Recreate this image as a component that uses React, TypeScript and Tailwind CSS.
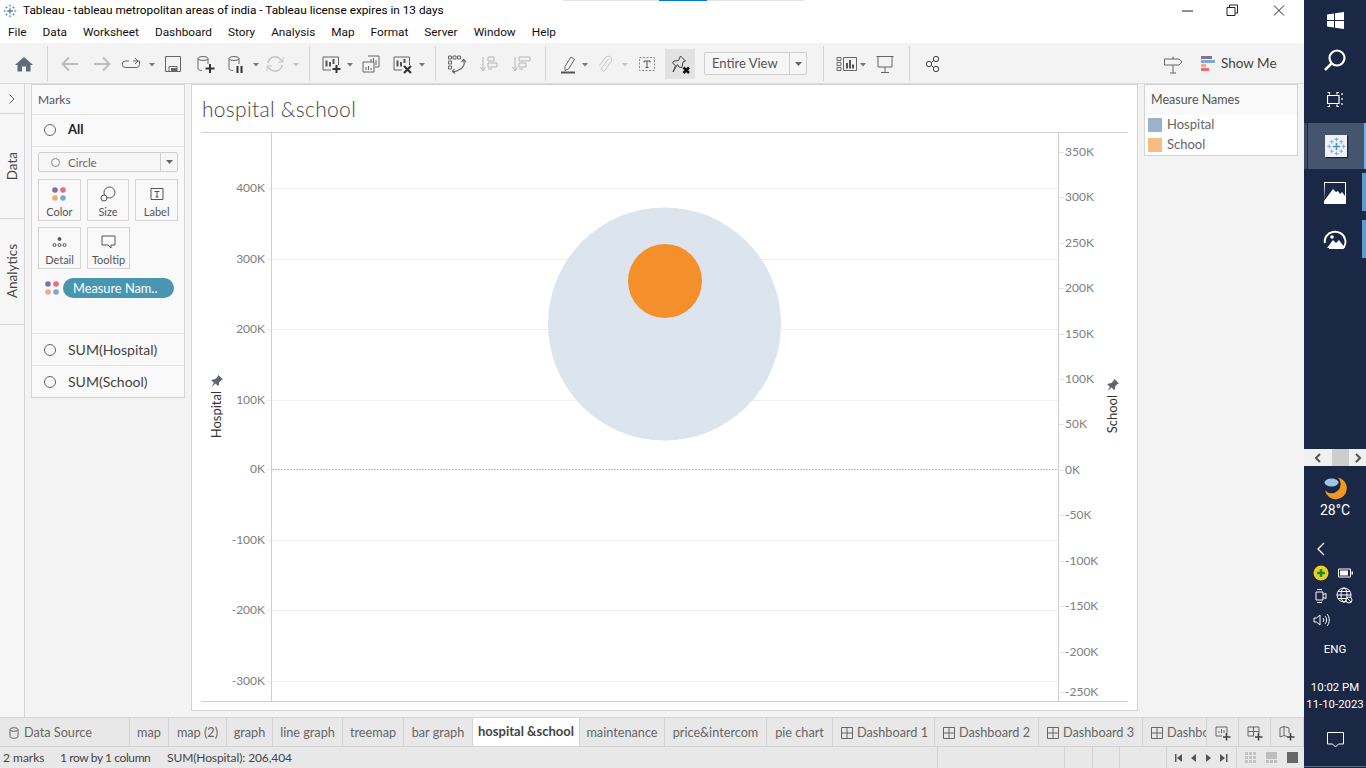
import React from 'react';

const menus = ['File', 'Data', 'Worksheet', 'Dashboard', 'Story', 'Analysis', 'Map', 'Format', 'Server', 'Window', 'Help'];

const leftTicks = [
  ['400K', 188], ['300K', 259], ['200K', 329], ['100K', 400], ['0K', 469], ['-100K', 540], ['-200K', 610], ['-300K', 681],
] as const;

const rightTicks = [
  ['350K', 152], ['300K', 197], ['250K', 243], ['200K', 288], ['150K', 334], ['100K', 379], ['50K', 424], ['0K', 470],
  ['-50K', 515], ['-100K', 561], ['-150K', 606], ['-200K', 652], ['-250K', 692],
] as const;

const sheetTabs = [
  { name: 'map', cls: 'w-[39px]' },
  { name: 'map (2)', cls: 'w-[58px]' },
  { name: 'graph', cls: 'w-[46px]' },
  { name: 'line graph', cls: 'w-[70px]' },
  { name: 'treemap', cls: 'w-[61px]' },
  { name: 'bar graph', cls: 'w-[69px]' },
];

const sheetTabs2 = [
  { name: 'maintenance', cls: 'w-[85px]' },
  { name: 'price&intercom', cls: 'w-[102px]' },
  { name: 'pie chart', cls: 'w-[66px]' },
];

const dashTabs = [
  { name: 'Dashboard 1', cls: 'w-[102px]' },
  { name: 'Dashboard 2', cls: 'w-[104px]' },
  { name: 'Dashboard 3', cls: 'w-[104px]' },
];

function Sep() {
  return <div className="w-px h-[35px] bg-[#d4d4d4] shrink-0" />;
}

function Caret({ cls, light }: { cls: string; light?: boolean }) {
  return (
    <svg width="6" height="4" viewBox="0 0 6 4" className={'shrink-0 mt-0.5 ' + cls}>
      <path d="M0 0h6L3 3.5z" fill={light ? '#c4c4c4' : '#777'} />
    </svg>
  );
}

function Ico({ cls, w = 20, children }: { cls: string; w?: number; children: React.ReactNode }) {
  return (
    <svg width={w} height="20" viewBox={`0 0 ${w} 20`} fill="none" stroke="#666" strokeWidth="1" className={'shrink-0 ' + cls}>
      {children}
    </svg>
  );
}

function TableauMark({ size, tone }: { size: number; tone: string }) {
  return (
    <svg width={size} height={size} viewBox="0 0 20 20" stroke={tone} fill="none">
      <path d="M10 6v8M6 10h8" strokeWidth="1.800" />
      <path d="M10 .5v4M8 2.500h4M10 15.500v4M8 17.500h4M.5 10h4M2.500 8v4M15.500 10h4M17.500 8v4" strokeWidth="1.100" opacity=".7" />
      <path d="M5 3v4M3 5h4M15 3v4M13 5h4M5 13v4M3 15h4M15 13v4M13 15h4" strokeWidth="1.100" opacity=".7" />
    </svg>
  );
}

function Dots() {
  return (
    <svg width="14" height="14" viewBox="0 0 14 14">
      <circle cx="3" cy="3" r="2.800" fill="#86709a" />
      <circle cx="11" cy="3" r="2.800" fill="#f0697a" />
      <circle cx="3" cy="11" r="2.800" fill="#f4a97c" />
      <circle cx="11" cy="11" r="2.800" fill="#7fa6cf" />
    </svg>
  );
}

function MarkCard({ label, ml, children }: { label: string; ml?: string; children: React.ReactNode }) {
  return (
    <div className={'w-[43px] h-[42px] border border-[#d4d4d4] flex flex-col items-center pt-[3px] text-[11px] leading-[14px] text-[#555] ' + (ml ?? '')}>
      <div className="h-[21px] flex items-center justify-center">{children}</div>
      <span className="mt-[1px]">{label}</span>
    </div>
  );
}

function Radio() {
  return <div className="w-[12px] h-[12px] rounded-full border-[1.5px] border-[#666] shrink-0" />;
}

function Pin() {
  return (
    <svg width="14" height="14" viewBox="0 0 14 14" fill="#5f6672">
      <path d="M8.500 1l4.500 4.500-1.500.6-2.400 2.400-.2 2.600-1 1-2.300-2.600L1.500 13l2.400-4.200L1.400 6.500l1-1 2.600-.2 2.400-2.400z" />
    </svg>
  );
}

function Toolbar() {
  return (
    <div className="h-[41px] bg-[#f3f3f3] border-b border-[#dcdcdc] flex items-center pt-[1px] shrink-0">
      <Ico cls="ml-[14px]">
        <path d="M10 3l9 8h-2.500v6.500h-4.500v-5H8v5H3.500V11H1z" fill="#5f6b7a" stroke="none" />
      </Ico>
      <div className="ml-[13px]"><Sep /></div>
      <Ico cls="ml-[12px]"><path d="M18 10H3M9 3.500L2.500 10 9 16.500" stroke="#bdbdbd" strokeWidth="2" /></Ico>
      <Ico cls="ml-[12px]"><path d="M2 10h15M11 3.500l6.500 6.500-6.500 6.500" stroke="#bdbdbd" strokeWidth="2" /></Ico>
      <Ico cls="ml-[9px]"><path d="M8 7H4.500a3 3 0 0 0 0 6.500h11a3 3 0 0 0 3-3V7H12M14 4l3 3-3 3" /></Ico>
      <Caret cls="ml-[8px]" />
      <Ico cls="ml-[8px]"><path d="M2.500 2.500h15v15h-15z" /><path d="M6 17.500v-5h8v5" /><path d="M8 14h6v3H8z" fill="#666" stroke="none" /></Ico>
      <Ico cls="ml-[12px]">
        <ellipse cx="8" cy="4.500" rx="5" ry="2" />
        <path d="M3 4.500v10c0 1 1.500 2 4 2M13 4.500V10" />
        <path d="M15 10v9M10.500 14.500h9" stroke="#333" strokeWidth="2" />
      </Ico>
      <Ico cls="ml-[11px]">
        <ellipse cx="8" cy="4.500" rx="5" ry="2" />
        <path d="M3 4.500v10c0 1 1.500 2 4 2M13 4.500V10" />
        <path d="M11.500 12v7M15.500 12v7" stroke="#333" strokeWidth="2" />
      </Ico>
      <Caret cls="ml-[7px]" />
      <Ico cls="ml-[6px]">
        <path d="M3 9a7 7 0 0 1 12-4l2 2M17 11a7 7 0 0 1-12 4l-2-2" stroke="#c4c4c4" strokeWidth="1.500" />
        <path d="M18 3v5h-5M2 17v-5h5" stroke="#c4c4c4" />
      </Ico>
      <Caret cls="ml-[8px]" light />
      <div className="ml-[10px]"><Sep /></div>
      <Ico cls="ml-[11px]">
        <path d="M2 3h15.500v8M2 3v13h8" />
        <path d="M5.500 6.500v6M9 8v4.500M12.500 5v5" strokeWidth="2" stroke="#555" />
        <path d="M15.500 11v8M11.500 15h8" stroke="#333" strokeWidth="2" />
      </Ico>
      <Caret cls="ml-[6px]" />
      <Ico cls="ml-[8px]">
        <path d="M7 2h11v11h-4" /><path d="M2 8h11v10H2z" fill="#f3f3f3" />
        <path d="M10 5v3M12.500 4v4M15 6v5M5 13v3M7.500 12v4M10 14v2" />
      </Ico>
      <Ico cls="ml-[11px]">
        <path d="M2 3h15.500v8M2 3v13h8" />
        <path d="M5.500 6.500v6M9 8v4.500M12.500 5v4" strokeWidth="2" stroke="#555" />
        <path d="M12 12l7 7M19 12l-7 7" stroke="#333" strokeWidth="2.200" />
      </Ico>
      <Caret cls="ml-[7px]" />
      <div className="ml-[10px]"><Sep /></div>
      <Ico cls="ml-[11px]">
        <path d="M1.500 2h3v3h-3zM6 2h3v3H6zM10.500 2h3v3h-3zM1.500 7h3v3h-3zM1.500 12h3v3h-3z" />
        <path d="M16.500 6c2 4 0 8-5 10M5.500 17.500c2 .5 4 0 6-1.500" strokeWidth="1.200" />
        <path d="M14.500 8l2-2.500L19 8M7.500 15l-2 2.500 2.500 2" strokeWidth="1.200" />
      </Ico>
      <Ico cls="ml-[12px]">
        <path d="M4 3v13M1.500 13L4 17l2.500-4" stroke="#b5b5b5" />
        <path d="M9 3h6v4H9zM9 9h9v4H9zM9 15h4" stroke="#b5b5b5" />
      </Ico>
      <Ico cls="ml-[12px]">
        <path d="M4 3v13M1.500 13L4 17l2.500-4" stroke="#b5b5b5" />
        <path d="M8 3h11v4H8zM8 9h7v4H8zM8 15h4" stroke="#b5b5b5" />
      </Ico>
      <div className="ml-[14px]"><Sep /></div>
      <Ico cls="ml-[12px]">
        <path d="M7 12.500L13 3l3.500 2.500-6 9.500-3.500 1.500z" />
        <path d="M3 18.500h14" stroke="#555" strokeWidth="2" />
      </Ico>
      <Caret cls="ml-[4px]" />
      <Ico cls="ml-[7px]">
        <path d="M14 4.500L6.500 14a2.200 2.200 0 0 0 3.500 2.500L16.500 7a3.500 3.500 0 0 0-5.500-4L4.500 11.500" stroke="#c4c4c4" />
      </Ico>
      <Caret cls="ml-[7px]" light />
      <Ico cls="ml-[9px]">
        <path d="M2.500 3.500h15v13h-15z" strokeDasharray="2 1.500" stroke="#888" />
        <path d="M7 7h6M10 7v6.500M8.500 13.500h3M7 7v1.500M13 7v1.500" stroke="#555" />
      </Ico>
      <div className="ml-[8px] w-[30px] h-[30px] bg-[#e2e2e2] flex items-center justify-center shrink-0">
        <svg width="24" height="24" viewBox="0 0 24 24" fill="none" stroke="#444">
          <path d="M12.500 4l5 5-2.500 1-1 5.500-3-.5-1.500-2.500L5 20l2.500-6.500L4.500 11 6 9l4.500-.5z" />
          <path d="M15.500 15.500l5.500 5.500M21 15.500L15.500 21" stroke="#111" strokeWidth="2.500" />
        </svg>
      </div>
      <div className="ml-[9px] w-[103px] h-[23px] border border-[#cfcfcf] rounded-[2px] flex items-center shrink-0 bg-[#f6f6f6]">
        <span className="w-[84px] pl-[7px] text-[13px] text-[#555] font-['Lato',sans-serif]">Entire View</span>
        <div className="flex-1 h-full border-l border-[#cfcfcf] flex items-center justify-center">
          <svg width="7" height="4" viewBox="0 0 7 4"><path d="M0 0h7L3.500 4z" fill="#666" /></svg>
        </div>
      </div>
      <div className="ml-[16px]"><Sep /></div>
      <Ico cls="ml-[12px]" w={22}>
        <path d="M1 3.500h4v3H1zM1 8.500h4v3H1zM1 13.500h4v3H1zM7.500 3.500h13v13h-13z" />
        <path d="M11 9v5.500M14 6v8.500M17 10.500v4" stroke="#555" strokeWidth="2" />
      </Ico>
      <Caret cls="ml-[2px]" />
      <Ico cls="ml-[9px]">
        <path d="M1.500 2.500h17M3 2.500v10.500h14V2.500" />
        <path d="M10 13v5M6 18.500h8" />
      </Ico>
      <div className="ml-[14px]"><Sep /></div>
      <Ico cls="ml-[12px]">
        <circle cx="7" cy="10" r="2.700" stroke="#444" /><circle cx="14" cy="5" r="2.700" stroke="#444" /><circle cx="14" cy="15" r="2.700" stroke="#444" />
        <path d="M9.300 8.500l2.500-2M9.300 11.500l2.500 2" stroke="#444" />
      </Ico>
      <div className="ml-auto flex items-center">
        <Ico cls="">
          <path d="M1.500 5h14.500l3 3-3 3H1.500zM10 2.500V5M10 11v8M7 19h6" />
        </Ico>
        <div className="ml-[18px] flex flex-col gap-px w-[14px]">
          <div className="h-[3px] w-[11px] bg-[#86709a]" />
          <div className="h-[3px] w-[14px] bg-[#7fa6cf]" />
          <div className="h-[3px] w-[5px] bg-[#f4a97c]" />
          <div className="h-[3px] w-[8px] bg-[#f0697a]" />
        </div>
        <span className="ml-[6px] mr-[28px] w-[55px] text-[13.500px] text-[#444] font-['Lato',sans-serif] whitespace-nowrap">Show Me</span>
      </div>
    </div>
  );
}

function LeftStrip() {
  return (
    <div className="w-[25px] h-full border-r border-[#d4d4d4] bg-[#f6f6f6] flex flex-col shrink-0 text-[#444] text-[13.500px] font-['Lato',sans-serif]">
      <div className="h-[30px] border-b border-[#d4d4d4] flex items-center justify-center">
        <svg width="8" height="12" viewBox="0 0 8 12" fill="none" stroke="#666"><path d="M1.500 1.500L6 6l-4.500 4.500" /></svg>
      </div>
      <div className="h-[105px] border-b border-[#d4d4d4] flex items-center justify-center pl-[1px]">
        <span className="[writing-mode:vertical-rl] rotate-180">Data</span>
      </div>
      <div className="h-[106px] border-b border-[#d4d4d4] flex items-center justify-center pl-[1px]">
        <span className="[writing-mode:vertical-rl] rotate-180">Analytics</span>
      </div>
    </div>
  );
}

function MarksCard() {
  return (
    <div className="ml-[6px] w-[154px] h-[314px] border border-[#d4d4d4] bg-[#f9f9f9] flex flex-col shrink-0 font-['Lato',sans-serif] text-[#444]">
      <div className="h-[30px] border-b border-[#e2e2e2] flex items-center pl-[6px] text-[12px] text-[#555]">Marks</div>
      <div className="h-[32px] pb-[2px] border-b border-[#e2e2e2] flex items-center pl-[12px] gap-[12px]">
        <Radio />
        <span className="text-[13px] font-bold text-[#222]">All</span>
      </div>
      <div className="h-[187px] px-[6px] pt-[5px] border-b border-[#e2e2e2]">
        <div className="h-[20px] border border-[#cfcfcf] rounded-[2px] flex items-center bg-[#f6f6f6]">
          <div className="w-[121px] flex items-center pl-[12px] gap-[8px] pt-[1px] text-[11.500px] text-[#666]">
            <div className="w-[9px] h-[9px] rounded-full border border-[#888]" />
            <span>Circle</span>
          </div>
          <div className="flex-1 h-full border-l border-[#cfcfcf] flex items-center justify-center">
            <svg width="7" height="4" viewBox="0 0 7 4"><path d="M0 0h7L3.500 4z" fill="#666" /></svg>
          </div>
        </div>
        <div className="flex mt-[7px]">
          <MarkCard label="Color"><Dots /></MarkCard>
          <MarkCard label="Size" ml="ml-[6px]">
            <svg width="16" height="16" viewBox="0 0 16 16" fill="none" stroke="#555">
              <circle cx="9.500" cy="6.500" r="5.500" /><circle cx="4" cy="12" r="3" fill="#f9f9f9" />
            </svg>
          </MarkCard>
          <MarkCard label="Label" ml="ml-[6px]">
            <svg width="14" height="14" viewBox="0 0 14 14" fill="none" stroke="#555">
              <path d="M1 1.500h12v11H1z" /><path d="M4.500 4.500h5M7 4.500v5.500M5.500 10h3" />
            </svg>
          </MarkCard>
        </div>
        <div className="flex mt-[6px]">
          <MarkCard label="Detail">
            <svg width="15" height="12" viewBox="0 0 15 12" fill="none" stroke="#555">
              <circle cx="7.500" cy="3" r="1.500" fill="#555" /><circle cx="2.500" cy="9" r="1.500" /><circle cx="7.500" cy="9" r="1.500" /><circle cx="12.500" cy="9" r="1.500" />
            </svg>
          </MarkCard>
          <MarkCard label="Tooltip" ml="ml-[6px]">
            <svg width="15" height="14" viewBox="0 0 15 14" fill="none" stroke="#555"><path d="M1 1h13v9H10v3L7 10H1z" /></svg>
          </MarkCard>
        </div>
        <div className="flex items-center mt-[9px] pl-[7px]">
          <Dots />
          <div className="ml-[4px] w-[111px] h-[20px] rounded-full bg-[#4996b2] text-white text-[12.800px] leading-[20px] pl-[10px] whitespace-nowrap">Measure Nam..</div>
        </div>
      </div>
      <div className="h-[32px] border-b border-[#e2e2e2] flex items-center pl-[12px] gap-[12px] text-[14px]">
        <Radio />
        <span>SUM(Hospital)</span>
      </div>
      <div className="flex-1 flex items-center pl-[12px] gap-[12px] text-[14px]">
        <Radio />
        <span>SUM(School)</span>
      </div>
    </div>
  );
}

function Chart() {
  return (
    <div className="mx-[9px] flex-1 flex border-y border-[#cfcfcf] relative">
      <div className="w-[71px] border-r border-[#cfcfcf] relative shrink-0" />
      <div className="flex-1">
        <svg width="786" height="568" viewBox="0 0 786 568">
          {leftTicks.map(([label, y]) =>
            label === '0K' ? (
              <line key={label} x1="0" x2="786" y1={y - 132.500} y2={y - 132.500} stroke="#bdbdbd" strokeDasharray="2 1" />
            ) : (
              <line key={label} x1="0" x2="786" y1={y - 132.500} y2={y - 132.500} stroke="#efefef" />
            ),
          )}
          <circle cx="392.500" cy="191" r="116.500" fill="#dce4ed" />
          <circle cx="393" cy="148" r="37" fill="#f48f2c" />
        </svg>
      </div>
      <div className="w-[70px] border-l border-[#cfcfcf] shrink-0" />
      {leftTicks.map(([label, y]) => (
        <div
          key={label}
          className="absolute left-0 w-[64px] text-right text-[12px] leading-[14px] text-[#808080]"
          style={{ top: y - 133 - 7 }}
        >
          {label}
        </div>
      ))}
      {leftTicks.map(([label, y]) => (
        <div key={label} className="absolute left-[65px] w-[5px] h-px bg-[#efefef]" style={{ top: y - 133 }} />
      ))}
      {rightTicks.map(([label, y]) => (
        <div
          key={label}
          className="absolute left-[864px] text-[12px] leading-[14px] text-[#808080]"
          style={{ top: y - 133 - 7 }}
        >
          {label}
        </div>
      ))}
      {rightTicks.map(([label, y]) => (
        <div key={label} className="absolute left-[858px] w-[5px] h-px bg-[#e5e5e5]" style={{ top: y - 133 }} />
      ))}
      <div className="absolute left-[8px] top-[241px] flex flex-col items-center w-[15px] text-[13px] text-[#333]">
        <Pin />
        <span className="mt-[3px] [writing-mode:vertical-rl] rotate-180 leading-[15px]">Hospital</span>
      </div>
      <div className="absolute left-[904px] top-[245px] flex flex-col items-center w-[15px] text-[13px] text-[#333]">
        <Pin />
        <span className="mt-[3px] [writing-mode:vertical-rl] rotate-180 leading-[15px]">School</span>
      </div>
    </div>
  );
}

function Viz() {
  return (
    <div className="ml-[6px] w-[947px] h-[627px] border border-[#d4d4d4] bg-white flex flex-col pb-[9px] shrink-0 font-['Lato',sans-serif]">
      <div className="h-[47px] shrink-0 pl-[10px] pt-[10px] text-[21px] tracking-[0.3px] leading-[28px] font-light text-[#444]">hospital &amp;school</div>
      <Chart />
    </div>
  );
}

function Legend() {
  return (
    <div className="ml-[6px] w-[154px] h-[72px] border border-[#d4d4d4] bg-white shrink-0 font-['Lato',sans-serif] text-[12.500px] text-[#666]">
      <div className="h-[30px] bg-[#f9f9f9] flex items-center pl-[6px] pt-[1px] text-[#555]">Measure Names</div>
      <div className="flex items-center h-[20px] pl-[3px] gap-[5px] text-[13px]">
        <div className="w-[14px] h-[14px] bg-[#9bb1cc]" />
        <span>Hospital</span>
      </div>
      <div className="flex items-center h-[20px] pl-[3px] gap-[5px] text-[13px]">
        <div className="w-[14px] h-[14px] bg-[#f7bd80]" />
        <span>School</span>
      </div>
    </div>
  );
}

function DashIcon() {
  return (
    <svg width="12" height="12" viewBox="0 0 12 12" fill="none" stroke="#666" className="shrink-0">
      <path d="M.5.500h11v11H.5zM6 .500v11M.5 6h11" />
    </svg>
  );
}

function Tabs() {
  const tabCls = 'h-full border-r border-[#d4d4d4] flex items-center justify-center pt-[2px] shrink-0 text-[12.700px] text-[#666] whitespace-nowrap';
  return (
    <div className="h-[30px] bg-[#e8e8e8] border-y border-[#d4d4d4] flex shrink-0 font-['Lato',sans-serif] overflow-hidden">
      <div className={tabCls + ' w-[130px] justify-start pl-[9px] gap-[5px]'}>
        <svg width="10" height="12" viewBox="0 0 10 12" fill="none" stroke="#666">
          <ellipse cx="5" cy="2.500" rx="4" ry="1.800" /><path d="M1 2.500v7c0 1 1.800 1.800 4 1.800s4-.8 4-1.800v-7" />
        </svg>
        <span>Data Source</span>
      </div>
      {sheetTabs.map((t) => (
        <div key={t.name} className={tabCls + ' ' + t.cls}>{t.name}</div>
      ))}
      <div className="h-full w-[107px] border-r border-[#d4d4d4] bg-white flex items-center justify-center shrink-0 font-bold text-[13px] text-[#444] whitespace-nowrap">hospital &amp;school</div>
      {sheetTabs2.map((t) => (
        <div key={t.name} className={tabCls + ' ' + t.cls}>{t.name}</div>
      ))}
      {dashTabs.map((t) => (
        <div key={t.name} className={tabCls + ' ' + t.cls + ' justify-start pl-[8px] gap-[4px]'}>
          <DashIcon />
          <span>{t.name}</span>
        </div>
      ))}
      <div className={tabCls + ' w-[64px] justify-start pl-[8px] gap-[4px] overflow-hidden'}>
        <DashIcon />
        <span>Dashboard 4</span>
      </div>
      <div className={tabCls + ' w-[32px]'}>
        <svg width="16" height="16" viewBox="0 0 16 16" fill="none" stroke="#666">
          <path d="M1 2h11v6M1 2v9h6M4 8V6M6.500 8V4M9 8V5" /><path d="M11.500 8v7.500M8 12h7.500" stroke="#444" strokeWidth="1.600" />
        </svg>
      </div>
      <div className={tabCls + ' w-[32px]'}>
        <svg width="16" height="16" viewBox="0 0 16 16" fill="none" stroke="#666">
          <path d="M1 2h11v6M1 2v9h6M6.500 2v9M1 6.500h11" /><path d="M11.500 8v7.500M8 12h7.500" stroke="#444" strokeWidth="1.600" />
        </svg>
      </div>
      <div className={tabCls + ' w-[33px]'}>
        <svg width="16" height="16" viewBox="0 0 16 16" fill="none" stroke="#666">
          <path d="M1 3l4-1.500v9L1 12zM5 1.500l5 1.500v5M5 10.500L8 11.500" /><path d="M11.500 8v7.500M8 12h7.500" stroke="#444" strokeWidth="1.600" />
        </svg>
      </div>
    </div>
  );
}

function StatusBar() {
  return (
    <div className="h-[21px] bg-[#e8e8e8] flex items-center shrink-0 font-['Lato',sans-serif] text-[12px] text-[#444] whitespace-nowrap">
      <span className="ml-[3px] w-[41px]">2 marks</span>
      <span className="ml-[16px] w-[90px] tracking-[-0.4px]">1 row by 1 column</span>
      <span className="ml-[17px] tracking-[-0.1px]">SUM(Hospital): 206,404</span>
      <div className="ml-auto h-full flex">
        <div className="w-[127px] border-l border-[#d4d4d4]" />
        <div className="w-[28px] border-l border-[#d4d4d4]" />
        <div className="w-[27px] border-l border-[#d4d4d4]" />
        <div className="w-[47px] border-l border-[#d4d4d4]" />
        <div className="w-[70px] border-l border-[#d4d4d4] flex items-center justify-center">
          <svg width="53" height="8" viewBox="0 0 53 8" fill="#555">
            <path d="M0 0h1.500v8H0zM7 0v8L2 4zM21 0v8l-5-4zM31 0v8l5-4zM45 0v8l5-4zM51 0h1.500v8H51z" />
          </svg>
        </div>
        <div className="w-[68px] border-l border-[#d4d4d4] flex items-center gap-[10px] pl-[8px]">
          <svg width="11" height="11" viewBox="0 0 11 11" fill="#c4c4c4">
            <path d="M0 0h3v3H0zM4 0h3v3H4zM8 0h3v3H8zM0 4h3v3H0zM4 4h3v3H4zM8 4h3v3H8zM0 8h3v3H0zM4 8h3v3H4zM8 8h3v3H8z" />
          </svg>
          <svg width="11" height="11" viewBox="0 0 11 11" fill="#bdbdbd">
            <path d="M0 0h11v7H0zM0 8h3v3H0zM4 8h3v3H4zM8 8h3v3H8z" />
          </svg>
          <div className="w-[11px] h-[11px] bg-[#666]" />
        </div>
      </div>
    </div>
  );
}

function Taskbar() {
  return (
    <div className="w-[62px] h-full bg-[#1a2745] flex flex-col items-stretch shrink-0 text-white font-['Roboto',sans-serif]">
      <div className="h-[40px] flex items-center justify-center">
        <svg width="17" height="17" viewBox="0 0 17 17" fill="#fff"><path d="M0 2.500L7 1.500v6.500H0zM8 1.300L17 0v8H8zM0 9h7v6.500L0 14.500zM8 9h9v8L8 15.700z" /></svg>
      </div>
      <div className="h-[40px] flex items-center justify-center">
        <svg width="24" height="24" viewBox="0 0 24 24" fill="none" stroke="#fff" strokeWidth="2.200"><circle cx="14" cy="10" r="7.500" /><path d="M8.500 15.500L2 22" strokeWidth="2.500" /></svg>
      </div>
      <div className="h-[43px] pb-[4px] flex items-center justify-center">
        <svg width="16" height="15" viewBox="0 0 16 15" fill="none" stroke="#fff" strokeWidth="1.200">
          <path d="M.5 .5h2v2M12 .5h-2v2M.5 14.500h2v-2M12 14.500h-2v-2M.5 3.500h11.500v8H.5zM15 1v2M15 6v2M15 11v2" />
        </svg>
      </div>
      <div className="h-[46px] flex">
        <div className="w-[4px] bg-[#3c4a63] border-r border-[#1a2745]" />
        <div className="flex-1 bg-[#46556e] flex items-center justify-center">
          <div className="w-[22px] h-[22px] bg-[#eef2f6] flex items-center justify-center shadow-[1px_1px_1px_#222]">
            <TableauMark size={19} tone="#5a93c6" />
          </div>
        </div>
        <div className="w-[2px] bg-[#6fb2e8]" />
      </div>
      <div className="h-[47px] flex items-center relative">
        <div className="flex-1 flex justify-center">
          <svg width="22" height="22" viewBox="0 0 22 22"><path d="M0 0h22v22H0z" fill="#fff" /><path d="M1 1h20v13l-3-4-2 2-2-3-2 1-3-3-9 12z" fill="#1a2745" /></svg>
        </div>
        <div className="absolute right-0 top-[4px] w-[4px] h-[38px] bg-[#5f9bd0]" />
      </div>
      <div className="h-[46px] flex items-center relative">
        <div className="flex-1 flex justify-center">
          <svg width="24" height="22" viewBox="0 0 24 22" fill="none">
            <path d="M2 15A10 9 0 0 1 22 11c1 3 0 7-2 9H6" stroke="#fff" strokeWidth="2" />
            <path d="M4 20l6-8 3 3 3-3 6 8z" fill="#fff" />
            <circle cx="9" cy="9" r="1.800" fill="#fff" />
          </svg>
        </div>
        <div className="absolute right-0 top-[4px] w-[4px] h-[38px] bg-[#5f9bd0]" />
      </div>
      <div className="flex-1" />
      <div className="h-[17px] bg-[#f0f0f0] flex items-center shrink-0">
        <div className="w-[28px] flex justify-center">
          <svg width="6" height="10" viewBox="0 0 6 10" fill="none" stroke="#555" strokeWidth="2"><path d="M5 1L1 5l4 4" /></svg>
        </div>
        <div className="w-[17px] h-full bg-[#cdcdcd]" />
        <div className="flex-1 flex justify-center">
          <svg width="6" height="10" viewBox="0 0 6 10" fill="none" stroke="#555" strokeWidth="2"><path d="M1 1l4 4-4 4" /></svg>
        </div>
      </div>
      <div className="h-[302px] shrink-0 flex flex-col items-center pt-[10px]">
        <svg width="24" height="24" viewBox="0 0 24 24">
          <path d="M15 1.500a11 11 0 1 1-13 13 9 9 0 0 0 13-13z" fill="#f29a1f" />
          <ellipse cx="8.500" cy="6.500" rx="7" ry="4" fill="#9cc4e4" />
        </svg>
        <span className="text-[14px] leading-[18px] mt-[1px]">28°C</span>
        <svg width="10" height="14" viewBox="0 0 10 14" fill="none" stroke="#fff" className="mt-[23px] -ml-[28px]"><path d="M8 1L2 7l6 6" strokeWidth="1.300" /></svg>
        <div className="w-full flex items-center mt-[9px] pl-[9px] gap-[9px]">
          <svg width="16" height="16" viewBox="0 0 16 16"><circle cx="8" cy="8" r="7.500" fill="#e8d020" /><path d="M8 4v8M4 8h8" stroke="#1d8a2e" strokeWidth="2.500" /></svg>
          <svg width="15" height="10" viewBox="0 0 15 10" fill="none"><path d="M.5 1h12v8H.5z" stroke="#fff" /><path d="M2 2.500h8v5H2z" fill="#fff" /><path d="M13.500 3.500h1.500v3h-1.500z" fill="#fff" /></svg>
        </div>
        <div className="w-full flex items-center mt-[6px] pl-[11px] gap-[9px]">
          <svg width="12" height="16" viewBox="0 0 12 16" fill="none" stroke="#fff"><path d="M1 4h7v8H1zM8 6.500l3-1v5l-3-1M2 1.500h5M2 14.500h5" /></svg>
          <svg width="17" height="17" viewBox="0 0 17 17" fill="none" stroke="#fff"><circle cx="8" cy="8" r="7" /><ellipse cx="8" cy="8" rx="3" ry="7" /><path d="M1 8h14M2 4.500h12M2 11.500h12" /><circle cx="13" cy="13" r="3" fill="#1a2745" /><path d="M11 11l4 4" /></svg>
        </div>
        <div className="w-full flex mt-[9px] pl-[9px]">
          <svg width="17" height="14" viewBox="0 0 17 14" fill="none" stroke="#fff"><path d="M1 5h2.500L7 2v10L3.500 9H1zM10 5c1 1 1 3 0 4M12 3c2 2 2 6 0 8M14 1c3 3 3 9 0 12" /></svg>
        </div>
        <span className="text-[11.500px] leading-[16px] mt-[14px]">ENG</span>
        <span className="text-[11.400px] leading-[17px] mt-[22px]">10:02 PM</span>
        <span className="text-[11.400px] leading-[17px] whitespace-nowrap">11-10-2023</span>
        <svg width="17" height="16" viewBox="0 0 17 16" fill="none" stroke="#fff" className="mt-[19px]"><path d="M.5.500h16v11.500h-5L8.500 15l-3-3h-5z" /></svg>
        <div className="mt-auto h-px w-full bg-[#5a6a80] mb-[1px]" />
      </div>
    </div>
  );
}

export default function App() {
  return (
    <div className="w-[1366px] h-[768px] flex overflow-hidden bg-white relative">
      <div className="w-[1304px] h-full flex flex-col shrink-0">
        <div className="h-[22px] flex items-center pl-[3px] shrink-0 font-['Roboto',sans-serif] text-[11.800px] text-black relative">
          <div className="w-[14px] flex"><TableauMark size={14} tone="#4a82b0" /></div>
          <span className="ml-[6px]">Tableau - tableau metropolitan areas of india - Tableau license expires in 13 days</span>
          <svg width="116" height="14" viewBox="0 0 116 14" fill="none" stroke="#222" className="ml-auto mr-[6px]">
            <path d="M0 7h11M45 3.500h8v8h-8zM47.500 3.500V1h8v8h-2.500M92 1.500l10 10M102 1.500l-10 10" />
          </svg>
        </div>
        <div className="h-[21px] flex items-center pl-[8px] gap-[16px] shrink-0 font-['Roboto',sans-serif] text-[11.800px] text-[#111]">
          {menus.map((m) => (
            <span key={m}>{m}</span>
          ))}
        </div>
        <Toolbar />
        <div className="flex-1 flex bg-[#f3f3f3] min-h-0">
          <LeftStrip />
          <MarksCard />
          <Viz />
          <Legend />
        </div>
        <Tabs />
        <StatusBar />
      </div>
      <Taskbar />
      <div className="absolute top-0 left-[563px] w-[241px] h-px bg-[#e5e5e5]" />
      <div className="absolute top-0 left-[659px] w-[48px] h-px bg-[#0078d7]" />
    </div>
  );
}
